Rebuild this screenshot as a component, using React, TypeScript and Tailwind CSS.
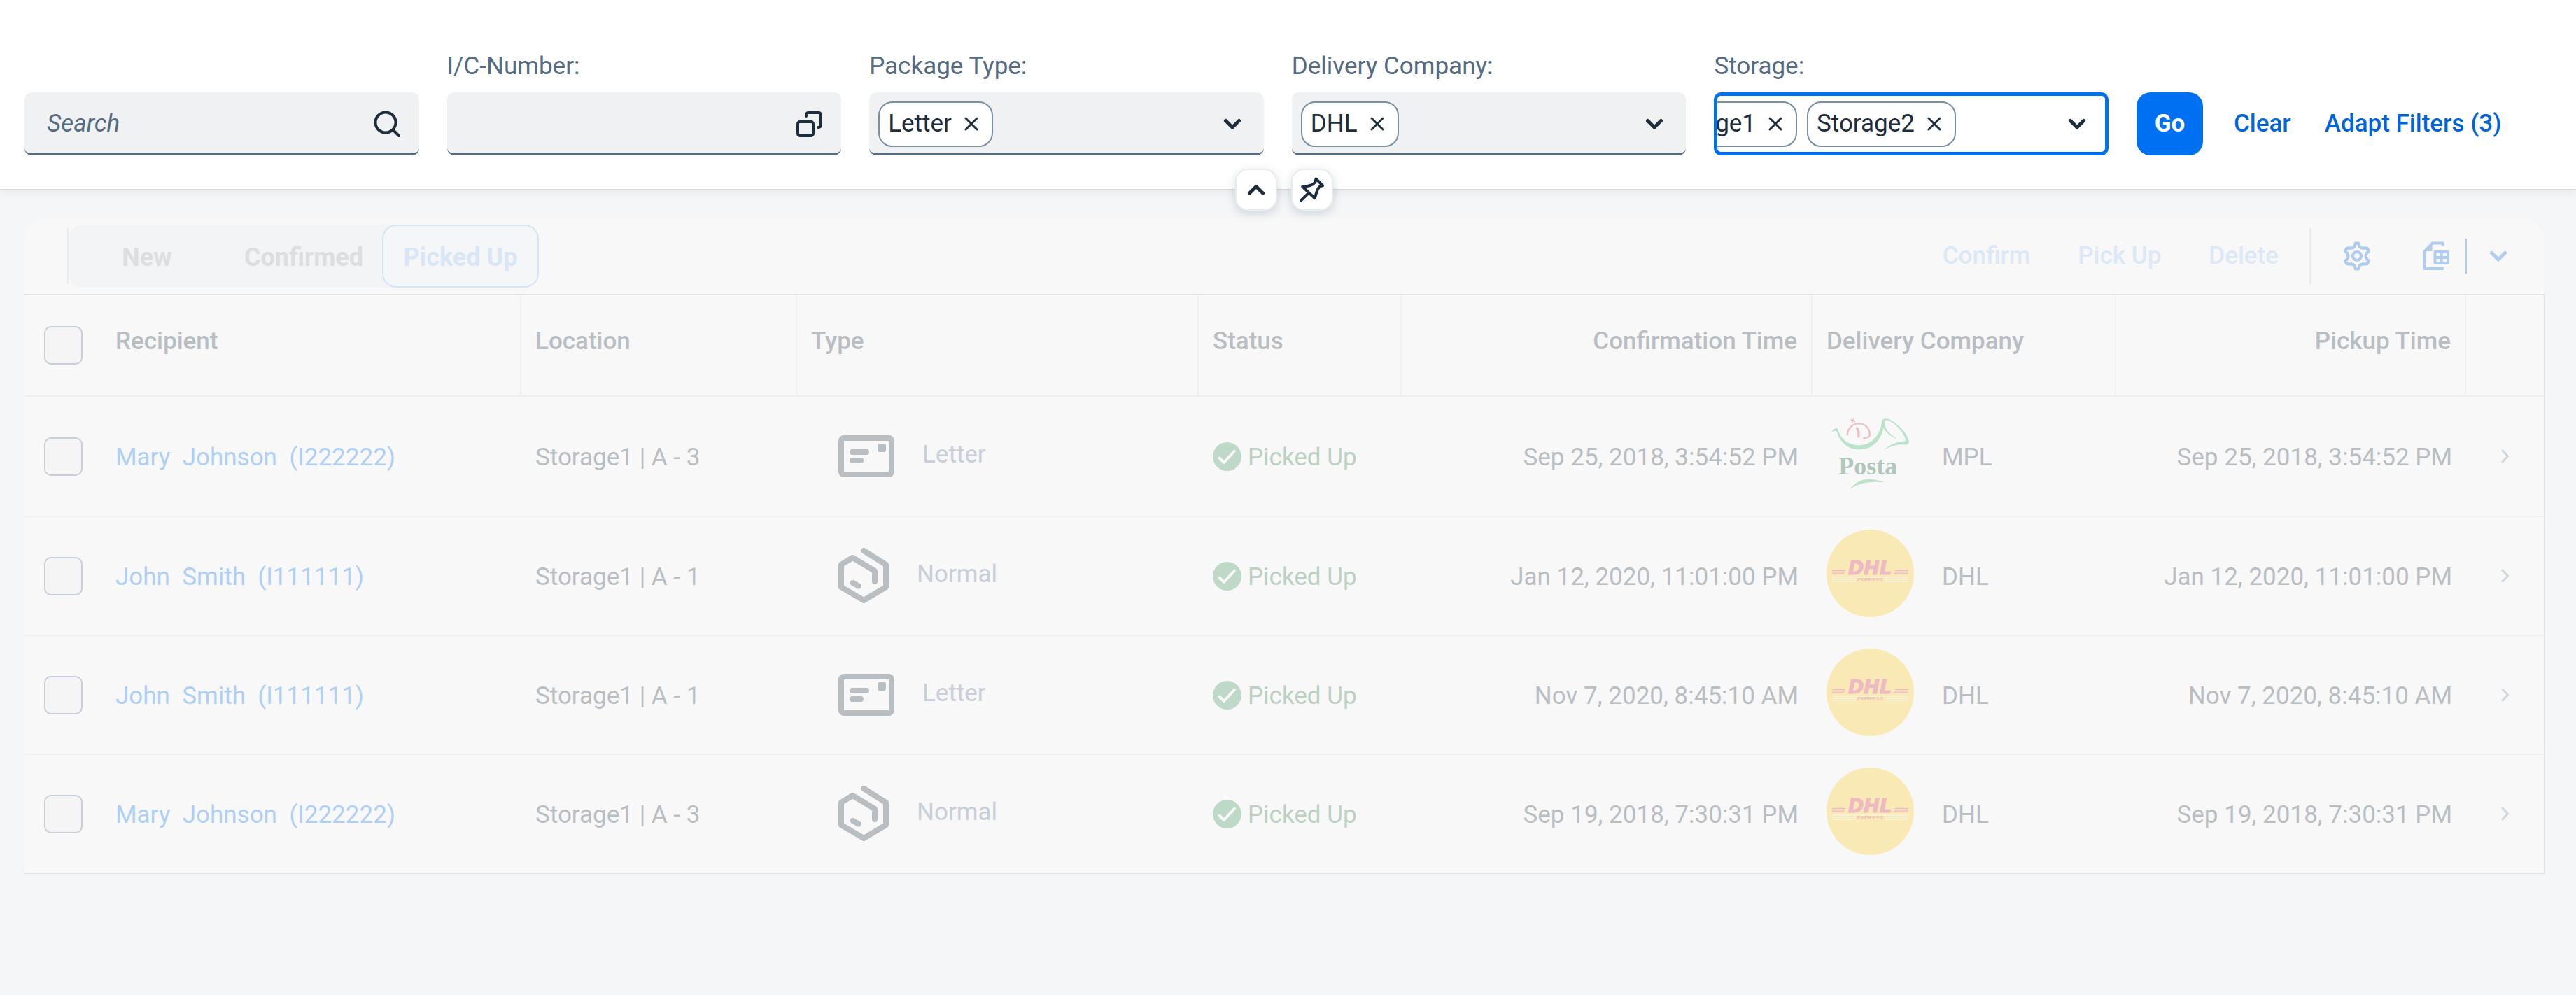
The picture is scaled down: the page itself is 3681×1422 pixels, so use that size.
import React from "react";

type IconProps = { className?: string };

const ChevronDown = ({ className }: IconProps) => (
  <svg viewBox="0 0 26 17" fill="none" stroke="currentColor" strokeWidth="5" strokeLinecap="round" strokeLinejoin="round" className={className}>
    <path d="M3.5 3.5 13 13l9.500-9.500" />
  </svg>
);

const ChevronUp = ({ className }: IconProps) => (
  <svg viewBox="0 0 26 17" fill="none" stroke="currentColor" strokeWidth="5" strokeLinecap="round" strokeLinejoin="round" className={className}>
    <path d="M3.5 13 13 3.500 22.500 13" />
  </svg>
);

const ChevronRight = ({ className }: IconProps) => (
  <svg viewBox="0 0 12 20" fill="none" stroke="currentColor" strokeWidth="3" strokeLinecap="round" strokeLinejoin="round" className={className}>
    <path d="m2 2 7.500 8L2 18" />
  </svg>
);

const Cross = ({ className }: IconProps) => (
  <svg viewBox="0 0 20 20" fill="none" stroke="currentColor" strokeWidth="3" strokeLinecap="round" className={className}>
    <path d="M2 2l16 16M18 2 2 18" />
  </svg>
);

const SearchIcon = () => (
  <svg viewBox="0 0 38 38" fill="none" stroke="currentColor" strokeWidth="4" strokeLinecap="round" className="size-[38px]">
    <circle cx="17" cy="17" r="14.500" />
    <path d="m27.500 27.500 8.500 8.500" />
  </svg>
);

const ValueHelpIcon = () => (
  <svg viewBox="0 0 37 37" fill="none" stroke="currentColor" strokeWidth="4" strokeLinecap="round" className="size-[37px]">
    <rect x="2" y="15" width="22" height="20" rx="3" />
    <path d="M14 7V5a3 3 0 0 1 3-3h15a3 3 0 0 1 3 3v15a3 3 0 0 1-3 3h-1" />
  </svg>
);

const PinIcon = () => (
  <svg viewBox="0 0 36 36" fill="none" stroke="currentColor" strokeWidth="4" strokeLinecap="round" strokeLinejoin="round" className="size-9">
    <path d="M23.500 2.500 33 12.200l-3.500.8c-5.500 4.500-5 10-7.800 17.300L4.300 13.700c7-1.500 11 0 16-4.500 2.500-2 3-4 3.200-6.700Z" />
    <path d="M12.800 23 2 33.500" />
  </svg>
);

const GearIcon = () => (
  <svg viewBox="-20 -21 40 42" fill="none" stroke="currentColor" strokeWidth="4.200" strokeLinejoin="round" className="h-[42px] w-10">
    <path d="M-2.200-18.300h4.400l1.300 4.600Q6-10.500 9.600-11.600l5.150.55 2.200 3.800-3.350 3.500Q11.500 0 13.600 3.750l3.350 3.500-2.200 3.800-5.150.55Q6 10.500 3.500 13.700l-1.300 4.600h-4.400l-1.300-4.600Q-6 10.500-9.600 11.600l-5.150-.55-2.200-3.800 3.350-3.500Q-11.500 0-13.600-3.750l-3.350-3.500 2.200-3.800 5.150-.55Q-6-10.500-3.500-13.700Z" />
    <circle r="6" />
  </svg>
);

const SpreadsheetIcon = () => (
  <svg viewBox="0 0 38 42" fill="none" stroke="currentColor" strokeWidth="4" strokeLinecap="round" strokeLinejoin="round" className="h-[42px] w-[38px]">
    <path d="M28.700 5V2.500H14L2.500 14.500V39h26" />
    <path d="M13.500 3v11H3Z" fill="currentColor" stroke="none" />
    <path d="M17.500 15H36v16H17.500ZM26.700 15v16M17.500 23H36" />
  </svg>
);

const LetterIcon = () => (
  <svg viewBox="0 0 80 60" fill="none" stroke="currentColor" strokeWidth="8" strokeLinecap="round" className="h-[60px] w-20">
    <rect x="4" y="4" width="72" height="52" rx="4" />
    <path d="M20 24h20M20 36h12" />
    <rect x="56" y="12" width="12" height="12" rx="3" fill="currentColor" stroke="none" />
  </svg>
);

const ParcelIcon = () => (
  <svg viewBox="0 0 72 80" fill="none" stroke="currentColor" strokeWidth="8" strokeLinecap="round" strokeLinejoin="round" className="h-20 w-[72px]">
    <path d="M36.300 4 68 24v32L36.300 75 4 56V24l16.300-10L52 33v15" />
    <path d="m20.700 50 8 4.500" />
  </svg>
);

const StatusIcon = () => (
  <svg viewBox="0 0 41 41" className="size-[41px]">
    <circle cx="20.500" cy="20.500" r="20.500" fill="#bed9c8" />
    <path d="m9.500 22.500 6.500 6.500L31 12.500" fill="none" stroke="#f8f8f8" strokeWidth="4" strokeLinecap="round" strokeLinejoin="round" />
  </svg>
);

const PostaLogo = () => (
  <svg viewBox="90 47 375 375" role="img" aria-label="Magyar Posta" className="size-[125px]">
    <g fill="#bbe2ca">
      <path d="M113 144c3-14 11-21 24-18 13 44 43 72 93 72 58 0 94-52 97-102 3-14 18-15 34-8 40 20 75 60 82 90 3 16-8 18-22 17-30-1-50 6-83 21 28-22 48-30 76-33 12-1 18-4 14-13-12-34-40-62-70-77-14-6-20-2-18 12 3 28 22 48 55 66-26-8-47-24-61-47-9 50-46 92-104 92-50 0-80-31-96-76-7-6-15-4-21 4Z" />
      <path d="M192 385c37-49 89-50 146-28-52-4-101-1-146 28Z" />
    </g>
    <g fill="none" stroke="#efc0c0">
      <path d="M179 156c2-32 22-51 51-51 32 0 49 28 44 53-7 8-15 9-27 11" strokeWidth="7" />
      <path d="M218 122c10 8 11 20 10 43" strokeWidth="10" />
      <path d="m193 88 20 9M206 84l-7 16" strokeWidth="6" />
    </g>
    <text x="268" y="323" textAnchor="middle" fontSize="108" fontWeight="700" fill="#b0c8bc" className="font-['Liberation_Serif',serif]">
      Posta
    </text>
  </svg>
);

const DhlLogo = () => (
  <svg viewBox="0 0 125 125" role="img" aria-label="DHL Express" className="size-[125px]">
    <circle cx="62.500" cy="62.500" r="62.500" fill="#f9eab5" />
    <path d="M8 58.500h19M8 60.800h18M8 63h17M98 58.500h19M97 60.800h20M96 63h21" stroke="#eeb9c2" strokeWidth="1.300" />
    <path d="M8 68h109M8 71h34M84 71h33M8 74h34M84 74h33" stroke="#f8f3da" strokeWidth="1.300" />
    <text x="62" y="64" textAnchor="middle" fontSize="27" fontWeight="700" fontStyle="italic" fill="#eeb9c2" stroke="#eeb9c2" strokeWidth="1" className="font-['DejaVu_Sans',sans-serif]">
      DHL
    </text>
    <text x="62" y="74" textAnchor="middle" fontSize="8" fontWeight="700" fontStyle="italic" fill="#efbdb8" className="font-['Liberation_Sans',sans-serif]">
      EXPRESS
    </text>
  </svg>
);

const fieldBase = "flex h-[90px] items-center rounded-[10px]";
const fieldIdle = "border-b-[3px] border-[#556b82] bg-[#eff1f2] pt-[3px]";

function Field({ id, label, children }: { id: string; label: string; children: React.ReactNode }) {
  return (
    <div className="min-w-0 flex-1">
      <label htmlFor={id} className="mb-4 block h-[42px] leading-[42px] text-[#556b82]">
        {label}
      </label>
      {children}
    </div>
  );
}

function Token({ text }: { text: string }) {
  return (
    <span className="flex h-[65px] shrink-0 items-center gap-[18px] rounded-[20px] border-2 border-[#788fa6] bg-white px-3 pr-[19px] text-[#1d2d3e]">
      {text}
      <button aria-label={`Remove ${text}`}>
        <Cross className="size-5" />
      </button>
    </span>
  );
}

function MultiCombo({ id, label, tokens }: { id: string; label: string; tokens: string[] }) {
  return (
    <Field id={id} label={label}>
      <div className={`${fieldBase} ${fieldIdle} pr-8 pl-[13px]`}>
        {tokens.map((t) => (
          <Token key={t} text={t} />
        ))}
        <input id={id} className="min-w-0 flex-1 bg-transparent outline-none" />
        <button aria-label={`Open ${label}`} className="text-[#1d2d3e]">
          <ChevronDown className="h-[17px] w-[26px]" />
        </button>
      </div>
    </Field>
  );
}

function FilterBar() {
  return (
    <header className="relative z-10 border-b-2 border-[#d9d9d9] bg-white pt-[74px] pb-12 shadow-[0_4px_12px_rgba(34,53,72,0.06)]">
      <div className="flex items-end gap-10 pr-[86px] pl-[35px]">
        <div className="min-w-0 flex-1">
          <div className={`${fieldBase} ${fieldIdle} px-[27px] pl-8`}>
            <input
              aria-label="Search"
              placeholder="Search"
              className="min-w-0 flex-1 bg-transparent outline-none placeholder:text-[#556b82] placeholder:italic"
            />
            <button aria-label="Start search" className="text-[#1d2d3e]">
              <SearchIcon />
            </button>
          </div>
        </div>
        <Field id="ic-number" label="I/C-Number:">
          <div className={`${fieldBase} ${fieldIdle} px-[27px] pl-8`}>
            <input id="ic-number" className="min-w-0 flex-1 bg-transparent outline-none" />
            <button aria-label="Value help" className="text-[#1d2d3e]">
              <ValueHelpIcon />
            </button>
          </div>
        </Field>
        <MultiCombo id="package-type" label="Package Type:" tokens={["Letter"]} />
        <MultiCombo id="delivery-company" label="Delivery Company:" tokens={["DHL"]} />
        <Field id="storage" label="Storage:">
          <div className={`${fieldBase} border-[5px] border-[#0070f2] bg-white pr-[27px]`}>
            <div className="flex min-w-0 flex-1 justify-end gap-[14px] overflow-hidden">
              <Token text="Storage1" />
              <Token text="Storage2" />
            </div>
            <input id="storage" className="w-[160px] bg-transparent outline-none" />
            <button aria-label="Open Storage:" className="text-[#1d2d3e]">
              <ChevronDown className="h-[17px] w-[26px]" />
            </button>
          </div>
        </Field>
        <div className="flex h-[90px] w-[542px] shrink-0 items-center">
          <button className="h-[90px] w-[95px] shrink-0 rounded-[20px] bg-[#0070f2] font-bold text-white">Go</button>
          <button className="ml-5 px-6 font-medium text-[#0064d9]">Clear</button>
          <button className="px-6 font-medium whitespace-nowrap text-[#0064d9]">Adapt Filters (3)</button>
        </div>
      </div>
      <div className="absolute inset-x-0 top-[241px] flex justify-center gap-5 pr-3 text-[#1d2d3e]">
        <button aria-label="Collapse header" className="flex size-[60px] items-center justify-center rounded-[18px] border-2 border-[#e9ecef] bg-white shadow-[0_4px_14px_rgba(34,53,72,0.18)]">
          <ChevronUp className="h-[17px] w-[26px]" />
        </button>
        <button aria-label="Pin header" className="flex size-[60px] items-center justify-center rounded-[18px] border-2 border-[#e9ecef] bg-white shadow-[0_4px_14px_rgba(34,53,72,0.18)]">
          <PinIcon />
        </button>
      </div>
    </header>
  );
}

function Toolbar() {
  return (
    <div className="flex h-[108px] items-center rounded-t-[30px] bg-[#f8f8f8] pl-[61px]">
      <span className="h-20 w-[2px] bg-[#ebebeb]" />
      <div className="grid h-[90px] grid-cols-3 rounded-[20px] bg-[#f2f4f6] text-[36px] font-bold text-[#dcdee0]">
        <button disabled className="w-56 pt-1">New</button>
        <button disabled className="w-56 pt-1">Confirmed</button>
        <button disabled className="w-56 rounded-[20px] border-2 border-[#d6e5f6] bg-[#f5f6f8] pt-1 text-[#d9e6f5]">Picked Up</button>
      </div>
      <div className="ml-auto flex items-center pr-5 font-medium text-[#dce8f6]">
        <button disabled className="mr-5 px-6">Confirm</button>
        <button disabled className="mr-5 px-6">Pick Up</button>
        <button disabled className="mr-5 px-6">Delete</button>
        <span className="mr-5 h-20 w-[3px] bg-[#ebebeb]" />
        <div className="flex items-center text-[#b0cdef]">
          <button aria-label="Settings" className="mr-5 flex w-[90px] justify-center">
            <GearIcon />
          </button>
          <button aria-label="Export" className="flex w-[90px] justify-center pl-[6px]">
            <SpreadsheetIcon />
          </button>
          <span className="h-[50px] w-[2px] bg-[#b0cdef]" />
          <button aria-label="Export options" className="flex w-[90px] justify-center">
            <ChevronDown className="h-[17px] w-[26px]" />
          </button>
        </div>
      </div>
    </div>
  );
}

type Row = {
  person: string;
  location: string;
  type: "Letter" | "Normal";
  time: string;
  company: "MPL" | "DHL";
};

const rows: Row[] = [
  { person: "Mary\u00a0 Johnson\u00a0 (I222222)", location: "Storage1 | A - 3", type: "Letter", time: "Sep 25, 2018, 3:54:52 PM", company: "MPL" },
  { person: "John\u00a0 Smith\u00a0 (I111111)", location: "Storage1 | A - 1", type: "Normal", time: "Jan 12, 2020, 11:01:00 PM", company: "DHL" },
  { person: "John\u00a0 Smith\u00a0 (I111111)", location: "Storage1 | A - 1", type: "Letter", time: "Nov 7, 2020, 8:45:10 AM", company: "DHL" },
  { person: "Mary\u00a0 Johnson\u00a0 (I222222)", location: "Storage1 | A - 3", type: "Normal", time: "Sep 19, 2018, 7:30:31 PM", company: "DHL" },
];

const Check = ({ label }: { label: string }) => (
  <input
    type="checkbox"
    aria-label={label}
    className="block size-[55px] appearance-none rounded-[10px] border-2 border-[#c9cfd8] bg-[#f5f5f5]"
  />
);

const headBase = "h-[145px] border-b-2 border-b-[#f0f0f1] font-medium text-[#b9bec3]";
const headCell = `${headBase} border-r-2 border-r-[#f1f1f2] px-5 pb-3 text-left`;
const headCellRight = `${headBase} border-r-2 border-r-[#f1f1f2] px-5 pb-3 text-right`;
const cell = "border-b-2 border-[#f0f0f1] px-5 group-last:border-[#e1e4ea]";
const textCell = `${cell} pt-1`;

function PackagesTable() {
  return (
    <table className="w-full table-fixed border-separate border-spacing-0 border-t-2 border-r border-[#dfe3e8] bg-[#f8f8f8] whitespace-nowrap text-[#b9bec3]">
      <colgroup>
        <col className="w-[110px]" />
        <col className="w-[600px]" />
        <col className="w-[394px]" />
        <col className="w-[574px]" />
        <col className="w-[290px]" />
        <col className="w-[587px]" />
        <col className="w-[434px]" />
        <col className="w-[500px]" />
        <col className="w-[111px]" />
      </colgroup>
      <thead>
        <tr>
          <th className={`${headBase} pl-7`}>
            <Check label="Select all" />
          </th>
          <th className={headCell}>Recipient</th>
          <th className={headCell}>Location</th>
          <th className={headCell}>Type</th>
          <th className={headCell}>Status</th>
          <th className={headCellRight}>Confirmation Time</th>
          <th className={headCell}>Delivery Company</th>
          <th className={headCellRight}>Pickup Time</th>
          <th className={headBase} />
        </tr>
      </thead>
      <tbody>
        {rows.map((r, i) => (
          <tr key={i} className="group h-[170px] first:h-[172px]">
            <td className={`${cell} pr-0 pl-7`}>
              <Check label={`Select row ${i + 1}`} />
            </td>
            <td className={textCell}>
              <a href="#" className="text-[#aecff6]">{r.person}</a>
            </td>
            <td className={textCell}>{r.location}</td>
            <td className={`${cell} pl-[59px]`}>
              <div className="flex items-center gap-10">
                {r.type === "Letter" ? <LetterIcon /> : <ParcelIcon />}
                <span className="pb-1 text-[#c8cfd9]">{r.type}</span>
              </div>
            </td>
            <td className={cell}>
              <div className="flex items-center gap-[9px] text-[#bcd1c2]">
                <StatusIcon />
                <span className="pt-1">Picked Up</span>
              </div>
            </td>
            <td className={`${textCell} text-right`}>{r.time}</td>
            <td className={cell}>
              <div className="flex items-center gap-10">
                <div className="pb-2">{r.company === "MPL" ? <PostaLogo /> : <DhlLogo />}</div>
                <span className="pt-1">{r.company}</span>
              </div>
            </td>
            <td className={`${textCell} text-right`}>{r.time}</td>
            <td className={cell}>
              <ChevronRight className="mx-auto h-5 w-3 text-[#cfd6dd]" />
            </td>
          </tr>
        ))}
      </tbody>
    </table>
  );
}

export default function App() {
  return (
    <div className="min-h-screen bg-[#f5f6f8] font-[Roboto,sans-serif] text-[35px] leading-[42px]">
      <FilterBar />
      <main className="px-[35px] pt-10 pr-[46px]">
        <Toolbar />
        <PackagesTable />
      </main>
    </div>
  );
}
